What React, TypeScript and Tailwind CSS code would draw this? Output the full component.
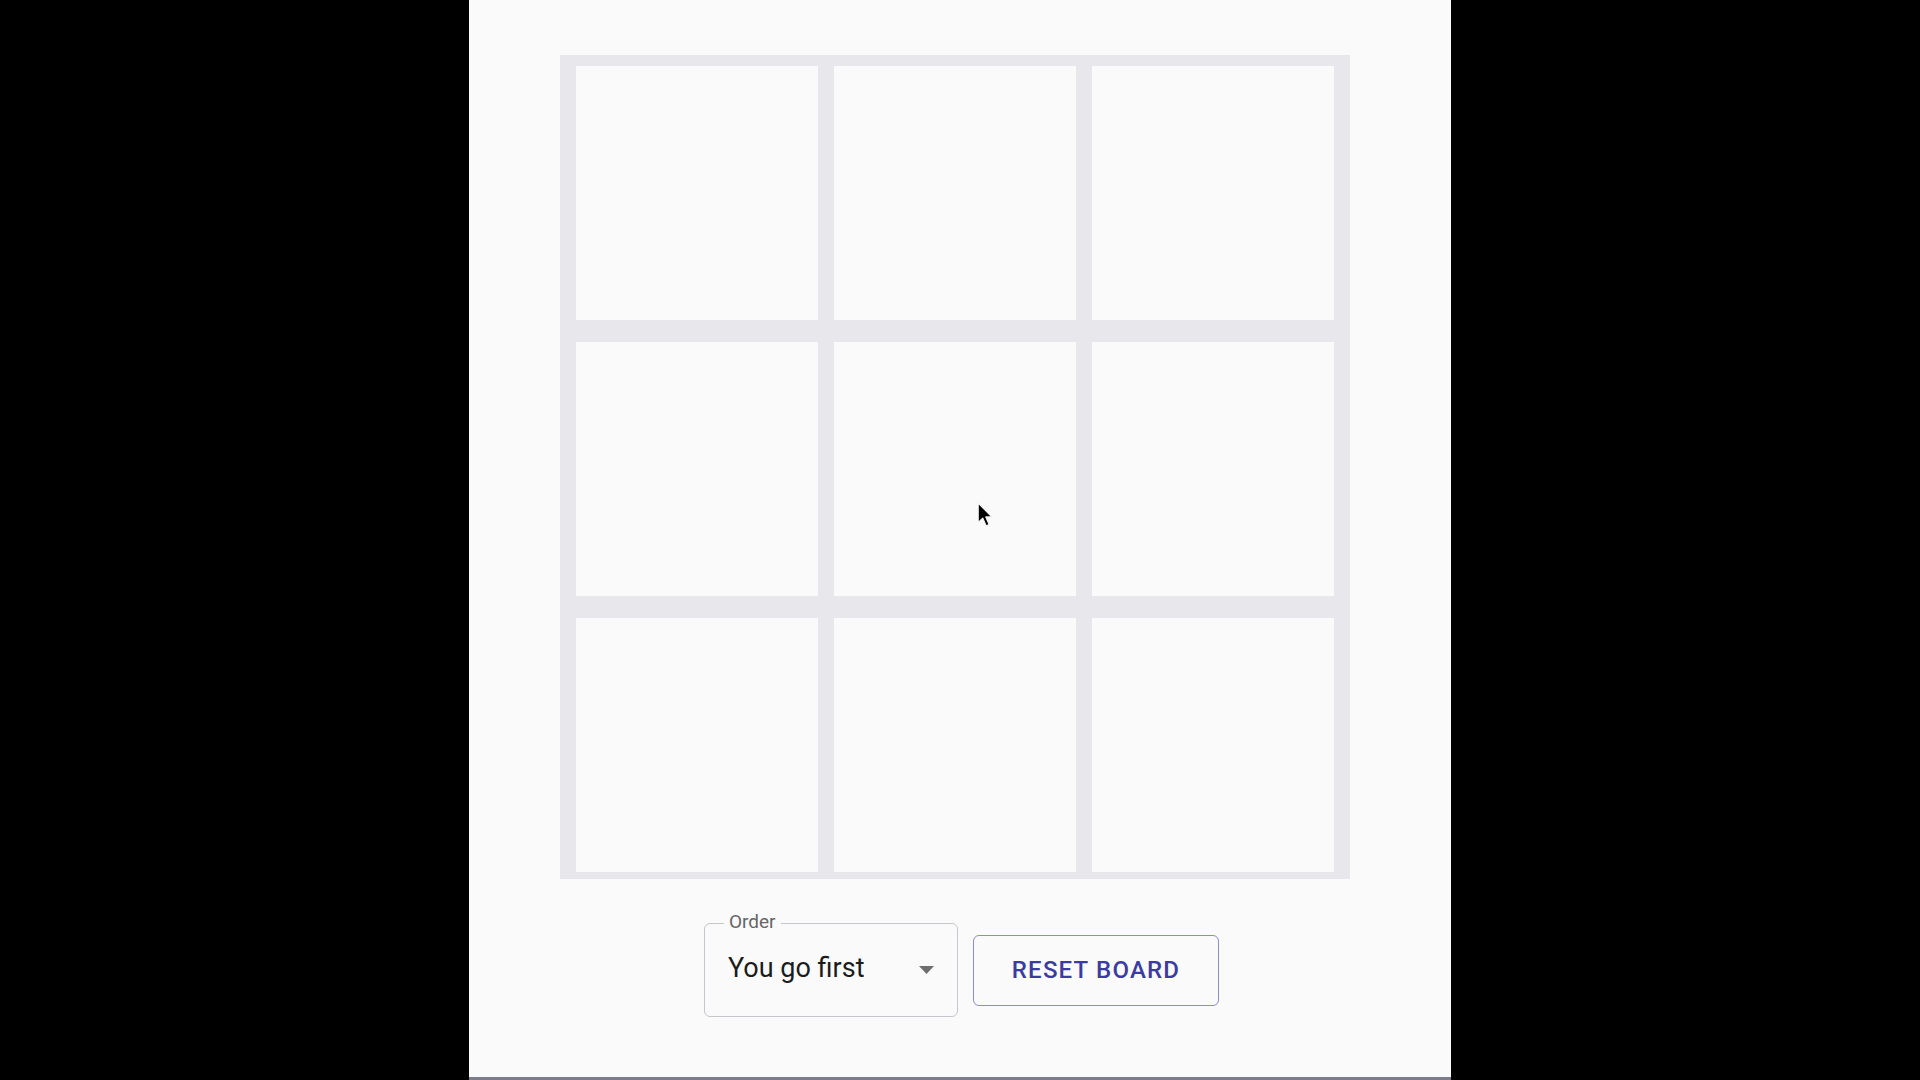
import React from "react";

const cells = Array.from({ length: 9 }, (_, i) => i);

function Cursor() {
  return (
    <svg width="16" height="26" viewBox="0 0 14 23" className="absolute left-[143px] top-[160px]">
      <path
        d="M1 1 L1 18 L5 14.2 L8 21 L10.6 19.9 L7.7 13.2 L13 13.2 Z"
        fill="#000"
        stroke="#f2f2f2"
        strokeWidth="1"
        strokeLinejoin="round"
      />
    </svg>
  );
}

export default function App() {
  return (
    <div className="flex h-[1080px] w-full justify-center bg-black font-['Roboto','Liberation_Sans',sans-serif]">
      <div className="flex h-full w-[982px] flex-col border-b-[3px] border-[#7c7c8c] bg-[#fafafa]">
        {/* board */}
        <div className="ml-[91px] mt-[55px] grid h-[824px] w-[790px] grid-cols-3 grid-rows-3 gap-x-4 gap-y-[22px] bg-[#e8e8ec] px-4 pb-[7px] pt-[11px]">
          {cells.map((i) => (
            <div key={i} className="relative bg-[#fafafa]">
              {i === 4 && <Cursor />}
            </div>
          ))}
        </div>

        {/* controls */}
        <div className="ml-[235px] mt-[44px] flex items-center gap-[15px]">
          <div className="relative flex h-[94px] w-[254px] items-center rounded-md border border-[#c6c6cc] pb-[4px] pl-[23px]">
            <span className="absolute -top-[12px] left-[19px] bg-[#fafafa] px-[5px] text-[19px] leading-none text-[#666666]">
              Order
            </span>
            <span className="text-[27px] text-[#1c1c1c]">You go first</span>
            <svg width="15" height="8" viewBox="0 0 15 8" className="absolute right-[23px] top-[42px]">
              <path d="M0 0 L15 0 L7.5 8 Z" fill="#6e6e6e" />
            </svg>
          </div>
          <button className="h-[71px] w-[246px] rounded-md border border-[#8a8ad8] text-[24px] font-medium tracking-[0.05em] text-[#3b3ba3]">
            RESET BOARD
          </button>
        </div>
      </div>
    </div>
  );
}
